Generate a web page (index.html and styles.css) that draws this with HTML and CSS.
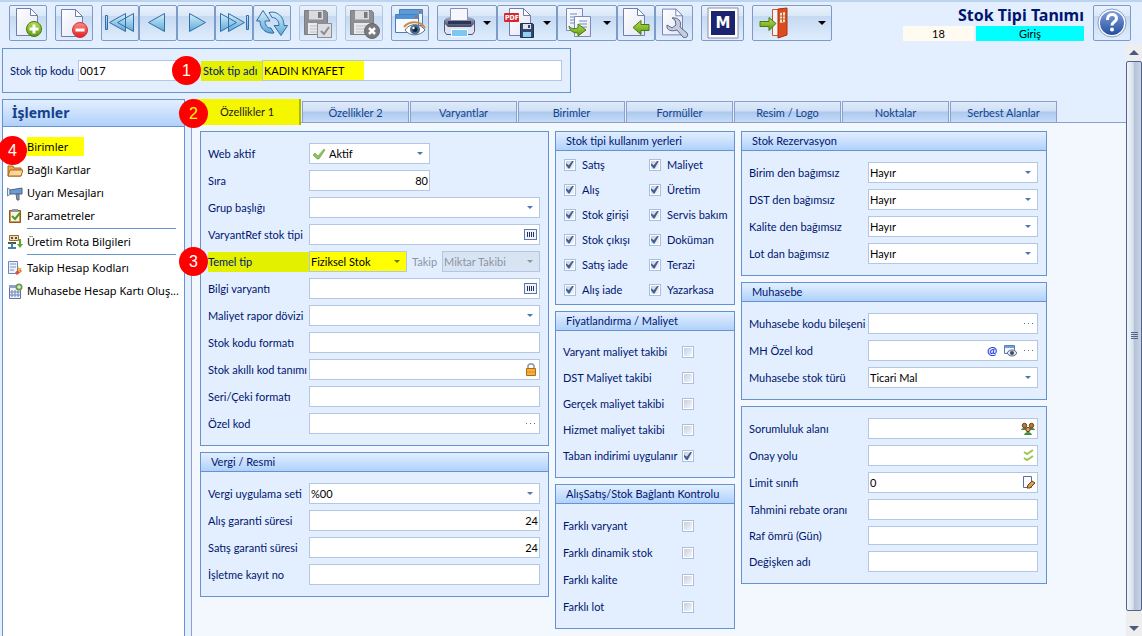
FILE: index.html
```html
<!DOCTYPE html>
<html lang="tr">
<head>
<meta charset="utf-8">
<title>Stok Tipi Tanımı</title>
<link rel="stylesheet" href="styles.css">
</head>
<body>

<!-- shared gradients and small icons -->
<svg class="defs" width="0" height="0" aria-hidden="true">
  <defs>
    <linearGradient id="blue" x1="0" y1="0" x2="0" y2="1"><stop offset="0" stop-color="#d3f0fb"/><stop offset="1" stop-color="#5ca9d8"/></linearGradient>
    <linearGradient id="paper" x1="0" y1="0" x2="1" y2="1"><stop offset="0" stop-color="#ffffff"/><stop offset="1" stop-color="#e3e6f5"/></linearGradient>
    <linearGradient id="green" x1="0" y1="0" x2="0" y2="1"><stop offset="0" stop-color="#b7dd4e"/><stop offset="1" stop-color="#5e9a12"/></linearGradient>
    <linearGradient id="red" x1="0" y1="0" x2="0" y2="1"><stop offset="0" stop-color="#ff8a80"/><stop offset="1" stop-color="#e01f22"/></linearGradient>
    <linearGradient id="help" x1="0" y1="0" x2="0" y2="1"><stop offset="0" stop-color="#7fa0dc"/><stop offset="1" stop-color="#234f9f"/></linearGradient>
    <linearGradient id="steel" x1="0" y1="0" x2="0" y2="1"><stop offset="0" stop-color="#a9b1c8"/><stop offset="1" stop-color="#3c4666"/></linearGradient>
    <symbol id="page" viewBox="0 0 22 28"><path d="M.5.5h14l7 7v20H.5z" fill="url(#paper)" stroke="#6f7fb0"/><path d="M14.5.5v7h7z" fill="#fff" stroke="#6f7fb0"/></symbol>
    <symbol id="floppy" viewBox="0 0 24 25"><path d="M.5.5h21l2 2v22H.5z" fill="#8d8f94" stroke="#7c7e83"/><path d="M5 .5h14v9H5z" fill="#d9dbdf"/><path d="M14 2h3.500v6H14z" fill="#77797e"/><path d="M4 13h16v11H4z" fill="#e9eaec"/><path d="M6 16h12M6 19h12M6 22h12" stroke="#bcbec2"/></symbol>
    <symbol id="barcode" viewBox="0 0 13 11"><rect x=".5" y=".5" width="12" height="10" fill="#eef3fc" stroke="#5b78b4"/><path d="M3.500 3v5M5.500 3v5M7.500 3v5M9.500 3v5" stroke="#27334f"/></symbol>
    <symbol id="dots" viewBox="0 0 9 2"><path d="M0 0h1v1H0zM4 0h1v1H4zM8 0h1v1H8z" fill="#4a6ea5"/></symbol>
  </defs>
</svg>

<header class="toolbar">
  <div class="group">
    <button class="tool" aria-label="Yeni"><svg viewBox="0 0 32 32"><use href="#page" x="4" y="1" width="22" height="28"/><circle cx="22" cy="22" r="7.500" fill="url(#green)" stroke="#47780e"/><path d="M22 17.500v9M17.500 22h9" stroke="#fff" stroke-width="3"/></svg></button>
  </div>
  <div class="group">
    <button class="tool" aria-label="Sil"><svg viewBox="0 0 32 32"><use href="#page" x="3" y="2" width="22" height="28"/><circle cx="22" cy="23" r="7.500" fill="url(#red)" stroke="#d03234"/><path d="M17.500 23h9" stroke="#fff" stroke-width="3"/></svg></button>
  </div>
  <div class="group">
    <button class="tool" aria-label="İlk"><svg viewBox="0 0 32 32"><g fill="url(#blue)" stroke="#356ca6"><path d="M1.500 8.500h2v14h-2zM5.500 15.500l16-9v18zM13.500 15.500l16-9v18z"/></g></svg></button>
    <button class="tool" aria-label="Önceki"><svg viewBox="0 0 32 32"><path d="M6.500 15.500l16-9v18z" fill="url(#blue)" stroke="#356ca6"/></svg></button>
    <button class="tool" aria-label="Sonraki"><svg viewBox="0 0 32 32"><path d="M25.500 15.500l-16-9v18z" fill="url(#blue)" stroke="#356ca6"/></svg></button>
    <button class="tool" aria-label="Son"><svg viewBox="0 0 32 32"><g fill="url(#blue)" stroke="#356ca6"><path d="M18.500 15.500l-16-9v18zM26.500 15.500l-16-9v18zM28.500 8.500h2v14h-2z"/></g></svg></button>
    <button class="tool" aria-label="Yenile"><svg viewBox="0 0 32 32"><g fill="url(#blue)" stroke="#356ca6" stroke-linejoin="round"><path d="M7 3.500L.5 14h3.500c0 8 6 13 14 12l-3-5c-4 0-6-3-6-7h5z"/><path d="M25 28.500l6.500-10H28c0-9-7-15-15-13l3 5c4 0 7 3 7 8h-5z"/></g></svg></button>
  </div>
  <div class="group">
    <button class="tool" disabled aria-label="Kaydet"><svg viewBox="0 0 32 32"><use href="#floppy" x="2" y="3" width="24" height="25"/><rect x="15.500" y="16.500" width="14" height="14" fill="#dcdde0" stroke="#8d8f94"/><path d="M19 24l3 3 5-7" fill="none" stroke="#8a8c90" stroke-width="2"/></svg></button>
  </div>
  <div class="group">
    <button class="tool" disabled aria-label="İptal"><svg viewBox="0 0 32 32"><use href="#floppy" x="2" y="3" width="24" height="25"/><circle cx="24" cy="24" r="7.500" fill="#77797d" stroke="#66686c"/><path d="M21 21l6 6M27 21l-6 6" stroke="#fff" stroke-width="2.500"/></svg></button>
  </div>
  <div class="group">
    <button class="tool" aria-label="Önizleme"><svg viewBox="0 0 32 32"><path d="M5.500 2.500h23v16h-23z" fill="#eef6fd" stroke="#4a7fbb"/><path d="M6 3h22v4H6z" fill="#5b9bd8"/><path d="M25 4h2v2h-2z" fill="#e5533d"/><path d="M1.500 7.500h23v18h-23z" fill="#f7fbff" stroke="#4a7fbb"/><path d="M2 8h22v4H2z" fill="#4f94d6"/><path d="M21 9h2v2h-2z" fill="#e5533d"/><path d="M11 23c4-7 15-7 20 0-5 6-15 7-20 0z" fill="#fff" stroke="#6b6f80"/><path d="M10 20c5-6 16-7 21 1" fill="none" stroke="#c98b4a" stroke-width="2"/><circle cx="21" cy="22.500" r="5" fill="#4a6d94"/><circle cx="21" cy="22.500" r="2.500" fill="#16233c"/><circle cx="19.500" cy="21" r="1.200" fill="#fff"/></svg></button>
  </div>
  <div class="group">
    <button class="tool menu" aria-label="Yazdır"><svg viewBox="0 0 32 32"><path d="M1.500 13.500l3-2h23l4 2v11l-2 3h-26l-2-3z" fill="#dfe3f0" stroke="#4e587d"/><path d="M2 12l4-2h20l5 2v5l-3 3H5l-3-3z" fill="url(#steel)"/><path d="M7.500 1.500h17v12h-17z" fill="#f6f7fc" stroke="#8790b4"/><path d="M5 14h23v3H5z" fill="#2c3553"/><path d="M8.500 22.500h16v7h-16z" fill="#7cc8f2" stroke="#f7fbff"/></svg></button>
    <button class="tool menu" aria-label="PDF olarak kaydet"><svg viewBox="0 0 32 32"><use href="#page" x="6" y="1" width="22" height="28"/><rect x="1" y="6" width="15" height="9" rx="1" fill="#d8262c"/><text x="2" y="13" class="pdf">PDF</text><path d="M17.500 16.500h12l1 1v13h-13z" fill="#34486c" stroke="#22324f"/><path d="M20 17h8v5h-8z" fill="#dfe6f2"/><path d="M25 18h2v3h-2z" fill="#34486c"/><path d="M20 25h8v5h-8z" fill="#8fd0ee"/></svg></button>
    <button class="tool menu" aria-label="Kopyala"><svg viewBox="0 0 32 32"><path d="M3.500 1.500h16v22h-16z" fill="url(#paper)" stroke="#7b8ab8"/><path d="M7 7h7M7 10h9M7 13h9M7 16h6" stroke="#6c8cc4"/><path d="M11.500 9.500h16v20h-16z" fill="url(#paper)" stroke="#7b8ab8"/><path d="M16 14h8M16 17h8M19 20h5" stroke="#6c8cc4"/><path d="M6 19c2 3 5 3 9 2v-4l8 6-8 6v-3c-5 0-8-2-9-7z" fill="url(#green)" stroke="#47780e"/></svg></button>
    <button class="tool" aria-label="İçeri al"><svg viewBox="0 0 32 32"><use href="#page" x="3" y="1" width="22" height="28"/><path d="M13 20.500l8-7v4h8v6h-8v4z" fill="url(#green)" stroke="#47780e"/></svg></button>
    <button class="tool" aria-label="Ayarlar"><svg viewBox="0 0 32 32"><use href="#page" x="4" y="1" width="21" height="28"/><path d="M9 18l5 3 4-3-1-5-3-2c6-1 10 3 8 9l7 6c2 3-1 6-4 4l-6-7c-6 2-11 0-10-5z" fill="#c5ccdd" stroke="#5b6788"/></svg></button>
  </div>
  <div class="group">
    <button class="tool logo" aria-label="Modül"><svg viewBox="0 0 32 32"><path d="M1 1h30v30H1z" fill="#fff" stroke="#8a8da0"/><path d="M4 4h24v24H4z" fill="#1b2470"/><text x="16" y="21" text-anchor="middle" class="m">M</text></svg></button>
  </div>
  <div class="group">
    <button class="tool exit" aria-label="Çıkış"><svg viewBox="0 0 32 32"><path d="M14.500 2.500h13v26h-13z" fill="#f2f4fa" stroke="#c2592f"/><path d="M20 2l9-1v27l-9 3z" fill="#dd4b1f" stroke="#a9350f"/><path d="M22 6l5-1v10l-5 1z" fill="#f2e6c8"/><path d="M24.500 5v10M22 9h5M22 12h5" stroke="#c2592f"/><path d="M18 16.500l-7-6v4H2v5h9v4z" fill="url(#green)" stroke="#47780e"/></svg></button>
  </div>
  <div class="status">
    <h1>Stok Tipi Tanımı</h1>
    <div class="badges"><span class="count">18</span><span class="mode">Giriş</span></div>
  </div>
  <button class="tool" aria-label="Yardım"><svg viewBox="0 0 32 32"><circle cx="16" cy="16" r="14" fill="#fff" stroke="#8a9cc4"/><circle cx="16" cy="16" r="12" fill="url(#help)"/><path d="M11.500 13c0-7 9-7 9-1.500 0 3.500-4.500 3-4.500 7" fill="none" stroke="#fff" stroke-width="3"/><circle cx="16" cy="22.500" r="2" fill="#fff"/></svg></button>
</header>

<div class="window">
  <div class="workspace">

    <form class="record">
      <label for="code">Stok tip kodu</label>
      <span class="field code"><input id="code" value="0017"></span>
      <label for="name" class="mark">Stok tip adı<b class="callout side">1</b></label>
      <span class="field name"><input id="name" value="KADIN KIYAFET"></span>
    </form>

    <div class="columns">
      <nav class="sidebar">
        <h2>İşlemler</h2>
        <ul>
          <li><a href="#"><span class="pad"></span><span class="mark">Birimler</span></a><b class="callout">4</b></li>
          <li><a href="#"><svg viewBox="0 0 16 16"><path d="M1 4h5l1 2h7v8H1z" fill="#e9a64c" stroke="#a8641c"/><path d="M3 8h13l-2 6H1z" fill="#fcd79a" stroke="#a8641c"/></svg>Bağlı Kartlar</a></li>
          <li><a href="#"><svg viewBox="0 0 16 16"><path d="M.5 3v8l3-2V5z" fill="#dfe6ef" stroke="#6c86a8"/><path d="M3 5l12-2v6L3 9z" fill="#6d9bd0" stroke="#45658f"/><path d="M9 9h3v6h-2z" fill="#8c99ab" stroke="#5a6677"/></svg>Uyarı Mesajları</a></li>
          <li><a href="#"><svg viewBox="0 0 16 16"><path d="M2.500 2.500h11v12h-11z" fill="#d99845" stroke="#8b5a1c"/><path d="M4 4h8v9H4z" fill="#f5f4ee"/><path d="M5 1h6v3H5z" fill="#8f98a8"/><path d="M5 8l3 3 5-6" fill="none" stroke="#4c9a1f" stroke-width="2"/></svg>Parametreler</a></li>
          <li class="line"></li>
          <li><a href="#"><svg viewBox="0 0 16 16"><path d="M2.500 1.500h9v5h-9z" fill="#f3dcae" stroke="#96702c"/><path d="M4 4h2M8 4h2M1 9h8" stroke="#5b5140" stroke-width="2"/><path d="M5 9v5M1 14h8" stroke="#3f84b0" stroke-width="2"/><path d="M12 5v5h-2l3 4 3-4h-2V5z" fill="#5aa82c"/></svg>Üretim Rota Bilgileri</a></li>
          <li class="line"></li>
          <li><a href="#"><svg viewBox="0 0 16 16"><path d="M1.500 1.500h9v12h-9z" fill="#eef2fa" stroke="#7084b4"/><path d="M3 4h6M3 7h6M3 10h4" stroke="#7d92c4"/><path d="M8 13l4-5 3 3-5 4z" fill="#d4533d"/><path d="M11 6l1 2 3 0-2 2 1 3-3-2z" fill="#f3b63a"/></svg>Takip Hesap Kodları</a></li>
          <li><a href="#"><svg viewBox="0 0 16 16"><path d="M2.500 4.500h11v11h-11z" fill="#eef2fa" stroke="#5c74a6"/><path d="M5 7v7M8 7v7M11 7v7M3 9h10M3 12h10" stroke="#6e86b6"/><path d="M2 2h7v3H2z" fill="#8ca2cc"/><circle cx="12" cy="4" r="3.500" fill="#6a9d4b"/><path d="M12 2v4M10 4h4" stroke="#fff"/></svg>Muhasebe Hesap Kartı Oluş...</a></li>
        </ul>
      </nav>

      <main class="main">
        <div class="tabs" role="tablist">
          <button class="tab active" role="tab" aria-selected="true">Özellikler 1<b class="callout">2</b></button>
          <button class="tab" role="tab">Özellikler 2</button>
          <button class="tab" role="tab">Varyantlar</button>
          <button class="tab" role="tab">Birimler</button>
          <button class="tab" role="tab">Formüller</button>
          <button class="tab" role="tab">Resim / Logo</button>
          <button class="tab" role="tab">Noktalar</button>
          <button class="tab" role="tab">Serbest Alanlar</button>
        </div>

        <form class="page">
          <div class="col">
            <section class="panel">
              <div class="rows">
                <label for="web">Web aktif</label>
                <span class="field combo half"><svg class="tick" viewBox="0 0 14 12"><path d="M1 7l2-2 3 3 6-7 1 1-6 9H5z" fill="#8dc05a" stroke="#5d9230" stroke-width=".5"/></svg><select id="web"><option>Aktif</option></select></span>
                <label for="order">Sıra</label>
                <span class="field half"><input id="order" class="num" value="80"></span>
                <label for="group">Grup başlığı</label>
                <span class="field combo"><select id="group"><option></option></select></span>
                <label for="ref">VaryantRef stok tipi</label>
                <span class="field"><input id="ref"><button type="button" aria-label="Seç"><svg width="13" height="11"><use href="#barcode"/></svg></button></span>
                <label for="base" class="mark">Temel tip<b class="callout side">3</b></label>
                <div class="pair">
                  <span class="field combo mark"><select id="base"><option>Fiziksel Stok</option></select></span>
                  <label for="track" class="off">Takip</label>
                  <span class="field combo off"><select id="track" disabled><option>Miktar Takibi</option></select></span>
                </div>
                <label for="info">Bilgi varyantı</label>
                <span class="field"><input id="info"><button type="button" aria-label="Seç"><svg width="13" height="11"><use href="#barcode"/></svg></button></span>
                <label for="currency">Maliyet rapor dövizi</label>
                <span class="field combo"><select id="currency"><option></option></select></span>
                <label for="format">Stok kodu formatı</label>
                <span class="field"><input id="format"></span>
                <label for="smart">Stok akıllı kod tanımı</label>
                <span class="field"><input id="smart"><button type="button" aria-label="Kilit"><svg width="13" height="13" viewBox="0 0 13 13"><path d="M4 6V2.500L5.500 1h3L10 2.500V6" fill="none" stroke="#8c9099" stroke-width="1.500"/><path d="M2.500 5.500h9v7h-9z" fill="#f5b041" stroke="#b8690f"/><path d="M3 9h8" stroke="#e08e1b"/></svg></button></span>
                <label for="serial">Seri/Çeki formatı</label>
                <span class="field"><input id="serial"></span>
                <label for="special">Özel kod</label>
                <span class="field"><input id="special"><button type="button" aria-label="Ara"><svg width="9" height="2"><use href="#dots"/></svg></button></span>
              </div>
            </section>

            <section class="panel">
              <h3>Vergi / Resmi</h3>
              <div class="rows">
                <label for="tax">Vergi uygulama seti</label>
                <span class="field combo"><select id="tax"><option>%00</option></select></span>
                <label for="buy">Alış garanti süresi</label>
                <span class="field"><input id="buy" class="num" value="24"></span>
                <label for="sell">Satış garanti süresi</label>
                <span class="field"><input id="sell" class="num" value="24"></span>
                <label for="reg">İşletme kayıt no</label>
                <span class="field"><input id="reg"></span>
              </div>
            </section>
          </div>

          <div class="col">
            <section class="panel">
              <h3>Stok tipi kullanım yerleri</h3>
              <div class="uses">
                <label><input type="checkbox" checked>Satış</label>
                <label><input type="checkbox" checked>Maliyet</label>
                <label><input type="checkbox" checked>Alış</label>
                <label><input type="checkbox" checked>Üretim</label>
                <label><input type="checkbox" checked>Stok girişi</label>
                <label><input type="checkbox" checked>Servis bakım</label>
                <label><input type="checkbox" checked>Stok çıkışı</label>
                <label><input type="checkbox" checked>Doküman</label>
                <label><input type="checkbox" checked>Satış iade</label>
                <label><input type="checkbox" checked>Terazi</label>
                <label><input type="checkbox" checked>Alış iade</label>
                <label><input type="checkbox" checked>Yazarkasa</label>
              </div>
            </section>

            <section class="panel">
              <h3>Fiyatlandırma / Maliyet</h3>
              <div class="flags tight">
                <label><span>Varyant maliyet takibi</span><input type="checkbox"></label>
                <label><span>DST Maliyet takibi</span><input type="checkbox"></label>
                <label><span>Gerçek maliyet takibi</span><input type="checkbox"></label>
                <label><span>Hizmet maliyet takibi</span><input type="checkbox"></label>
                <label><span>Taban indirimi uygulanır</span><input type="checkbox" checked></label>
              </div>
            </section>

            <section class="panel">
              <h3>AlışSatış/Stok Bağlantı Kontrolu</h3>
              <div class="flags">
                <label><span>Farklı varyant</span><input type="checkbox"></label>
                <label><span>Farklı dinamik stok</span><input type="checkbox"></label>
                <label><span>Farklı kalite</span><input type="checkbox"></label>
                <label><span>Farklı lot</span><input type="checkbox"></label>
              </div>
            </section>
          </div>

          <div class="col">
            <section class="panel">
              <h3>Stok Rezervasyon</h3>
              <div class="rows wide">
                <label for="unit">Birim den bağımsız</label>
                <span class="field combo"><select id="unit"><option>Hayır</option></select></span>
                <label for="dst">DST den bağımsız</label>
                <span class="field combo"><select id="dst"><option>Hayır</option></select></span>
                <label for="quality">Kalite den bağımsız</label>
                <span class="field combo"><select id="quality"><option>Hayır</option></select></span>
                <label for="lot">Lot dan bağımsız</label>
                <span class="field combo"><select id="lot"><option>Hayır</option></select></span>
              </div>
            </section>

            <section class="panel">
              <h3>Muhasebe</h3>
              <div class="rows wide">
                <label for="acc">Muhasebe kodu bileşeni</label>
                <span class="field"><input id="acc"><button type="button" aria-label="Ara"><svg width="9" height="2"><use href="#dots"/></svg></button></span>
                <label for="mh">MH Özel kod</label>
                <span class="field"><input id="mh">
                  <button type="button" class="at">@</button>
                  <button type="button" aria-label="Göster"><svg width="13" height="12" viewBox="0 0 13 12"><path d="M.5.5h10v8H.5z" fill="#f4f8fd" stroke="#5a7fb0"/><path d="M1 1h9v2H1z" fill="#6fa0d8"/><path d="M3 8c2-4 8-4 10 0-2 4-8 4-10 0z" fill="#dfe3ea" stroke="#5c6780"/><circle cx="8" cy="8" r="2" fill="#3a4c6e"/></svg></button>
                  <button type="button" aria-label="Ara"><svg width="9" height="2"><use href="#dots"/></svg></button></span>
                <label for="kind">Muhasebe stok türü</label>
                <span class="field combo"><select id="kind"><option>Ticari Mal</option></select></span>
              </div>
            </section>

            <section class="panel">
              <div class="rows wide">
                <label for="area">Sorumluluk alanı</label>
                <span class="field"><input id="area"><button type="button" aria-label="Kişiler"><svg width="14" height="13" viewBox="0 0 14 13"><path d="M0 8c1-3 6-3 7 0zM7 8c1-3 6-3 7 0z" fill="#3f8f3a"/><circle cx="3.500" cy="3.500" r="2.200" fill="#b9783c" stroke="#6b3f16"/><circle cx="10.500" cy="3.500" r="2.200" fill="#b9783c" stroke="#6b3f16"/><path d="M3 13c1-4 7-4 8 0z" fill="#3f8f3a"/><circle cx="7" cy="7.500" r="2.200" fill="#d9a066" stroke="#6b3f16"/></svg></button></span>
                <label for="flow">Onay yolu</label>
                <span class="field"><input id="flow"><button type="button" aria-label="Onay"><svg width="13" height="13" viewBox="0 0 13 13"><path d="M2 3l3 2 6-4M2 9l3 2 6-4" fill="none" stroke="#9cc653" stroke-width="2"/></svg></button></span>
                <label for="limit">Limit sınıfı</label>
                <span class="field"><input id="limit" value="0"><button type="button" aria-label="Düzenle"><svg width="13" height="13" viewBox="0 0 13 13"><path d="M1.500.5h8v11h-8z" fill="#fdfdff" stroke="#5b6f9e"/><path d="M5 12l1-3 4-4 3 2-5 5z" fill="#e09a4f" stroke="#6b3f16"/></svg></button></span>
                <label for="rebate">Tahmini rebate oranı</label>
                <span class="field"><input id="rebate"></span>
                <label for="shelf">Raf ömrü (Gün)</label>
                <span class="field low"><input id="shelf"></span>
                <label for="variable">Değişken adı</label>
                <span class="field"><input id="variable"></span>
              </div>
            </section>
          </div>
        </form>
      </main>
    </div>
  </div>

  <div class="scrollbar">
    <button class="up" aria-label="Yukarı"></button>
    <div class="thumb"></div>
    <button class="down" aria-label="Aşağı"></button>
  </div>
</div>

</body>
</html>
```
FILE: styles.css
```css
* {
  box-sizing: border-box;
}

body {
  display: flex;
  flex-direction: column;
  height: 100vh;
  margin: 0;
  overflow: hidden;
  background: #e3efff;
  border-top: 2px solid #bdd4ee;
  color: #00156e;
  font: 11px/14px Lato, Tahoma, sans-serif;
}

button, input, select {
  margin: 0;
  padding: 0;
  border: none;
  background: none;
  border-radius: 0;
  font: inherit;
  color: inherit;
}

svg {
  display: block;
  flex: none;
}

.defs {
  position: absolute;
}

/* Toolbar */
.toolbar {
  display: flex;
  gap: 8px;
  padding: 3px 11px 3px 9px;
}

.group {
  display: flex;
}

.tool {
  display: flex;
  align-items: center;
  justify-content: center;
  width: 38px;
  height: 36px;
  border: 1px solid #7d9bc8;
  border-radius: 2px;
  background: linear-gradient(#e9f2fd 0%, #dbe8f8 28%, #c5d9f1 30%, #dfedfd 100%);
}

.tool svg {
  width: 32px;
  height: 32px;
}

.tool:disabled {
  border-color: #b4c4dc;
}

.menu, .exit {
  width: 60px;
  justify-content: space-between;
  padding: 0 5px;
}

.logo {
  width: 43px;
}

.exit {
  width: 80px;
}

.menu::after, .exit::after {
  content: "";
  border: 4px solid transparent;
  border-top-color: #000;
  border-bottom: none;
}

.pdf {
  font: bold 7px "DejaVu Sans Condensed", sans-serif;
  fill: #fff;
}

.m {
  font: bold 15px "DejaVu Sans", sans-serif;
  fill: #fff;
}

.status {
  margin: 0 1px 0 auto;
  text-align: right;
}

.status h1 {
  margin: 0;
  font: bold 16px/21px "Noto Sans", sans-serif;
}

.badges {
  display: flex;
  justify-content: flex-end;
  gap: 2px;
  color: #000;
  line-height: 15px;
  text-align: center;
}

.count {
  width: 71px;
  background: #fffbf0;
}

.mode {
  width: 108px;
  background: #0ff;
}

/* Window body */
.window {
  display: flex;
  flex: 1;
  min-height: 0;
}

.workspace {
  display: flex;
  flex: 1;
  flex-direction: column;
  min-width: 0;
  padding: 4px 0 0 2px;
}

.record {
  display: flex;
  align-items: center;
  max-width: 569px;
  margin-bottom: 6px;
  padding: 11px 8px 11px 7px;
  border: 1px solid #6593cf;
}

.record .code {
  width: 106px;
  margin-right: 17px;
}

.record label:first-child {
  width: 68px;
}

.record .mark {
  width: 61px;
  padding-left: 2px;
}

.record .name {
  flex: 1;
  background: linear-gradient(90deg, #ff0 101px, #fff 101px);
}

.field {
  display: flex;
  align-items: center;
  height: 21px;
  min-width: 0;
  border: 1px solid #b3c7e4;
  background: #fff;
  color: #000;
}

.field input, .field select {
  flex: 1;
  width: 0;
  min-width: 0;
  height: 100%;
  padding: 0 1px;
  outline: none;
  appearance: none;
}

.field button {
  display: flex;
  align-items: center;
  justify-content: center;
  width: 18px;
}

.field .num {
  text-align: right;
}

.combo::after {
  content: "";
  margin: 0 6px 0 -12px;
  border: 3px solid transparent;
  border-top-color: #4a78b5;
  border-bottom: none;
  pointer-events: none;
}

.field .at {
  color: #2440e0;
  font-size: 12px;
  font-weight: bold;
}

.tick {
  width: 14px;
  height: 12px;
  margin: 0 2px;
}

.low {
  height: 19px;
}

label.mark {
  position: relative;
  height: 20px;
  background: #e3f000;
  line-height: 20px;
}

.callout {
  position: absolute;
  z-index: 2;
  width: 29px;
  height: 29px;
  border-radius: 50%;
  background: #f00;
  color: #fff;
  font: 16px/29px "Liberation Sans", sans-serif;
  text-align: center;
}

.side {
  top: -5px;
  left: -29px;
}

/* Sidebar */
.columns {
  display: flex;
  flex: 1;
  gap: 6px;
  min-height: 0;
}

.sidebar {
  width: 183px;
  border: 1px solid #6593cf;
  border-bottom: none;
  background: #fff;
  color: #000;
  font: 11px/23px "Noto Sans", sans-serif;
}

.sidebar h2 {
  margin: 0;
  padding-left: 9px;
  border-bottom: 1px solid #6593cf;
  background: linear-gradient(#e3efff, #b0d1fb);
  color: #15428b;
  font: bold 14px/26px "Noto Sans", sans-serif;
}

.sidebar ul {
  margin: 0;
  padding: 8px 0 0 4px;
  list-style: none;
}

.sidebar li {
  position: relative;
}

.sidebar a {
  display: flex;
  align-items: center;
  gap: 4px;
  height: 23px;
  color: inherit;
  text-decoration: none;
  white-space: nowrap;
}

.sidebar svg, .pad {
  width: 16px;
  height: 16px;
}

.sidebar .mark {
  width: 57px;
  background: #ff0;
  line-height: 19px;
}

.sidebar .line {
  height: 1px;
  margin: 1px 8px 1px 20px;
  background: #6593cf;
}

.sidebar .callout {
  top: 1px;
  left: -9px;
}

/* Tabs */
.main {
  display: flex;
  flex: 1;
  flex-direction: column;
  min-width: 0;
}

.tabs {
  display: grid;
  grid-template-columns: 110fr repeat(7, 107fr);
  align-items: end;
  gap: 1px;
  padding: 2px 69px 0 0;
  border-bottom: 1px solid #8ba0cc;
}

.tab {
  height: 21px;
  padding-top: 2px;
  border: 1px solid #8ba0cc;
  border-bottom: none;
  background: linear-gradient(#dfebfb 0%, #cfdff5 45%, #abc8ee 50%, #c6dcf8 100%);
  color: #15428b;
}

.active {
  position: relative;
  height: 26px;
  margin: -2px 0 -3px;
  padding: 0 0 0 4px;
  border: none;
  border-right: 2px solid #b3b800;
  background: #f4f700;
  color: #1c1c1c;
}

.active .callout {
  top: 0;
  left: -12px;
  color: #ff0;
}

/* Form panels */
.page {
  display: grid;
  flex: 1;
  grid-template-columns: 349fr 180fr 306fr;
  align-content: start;
  gap: 6px;
  min-height: 0;
  padding: 8px 79px 0 8px;
  border-left: 1px solid #8ba0cc;
  background: #f3f8ff;
}

.col {
  display: flex;
  flex-direction: column;
  gap: 6px;
  min-width: 0;
}

.panel {
  border: 1px solid #6593cf;
  background: #e3efff;
}

.panel h3 {
  margin: 0;
  padding-left: 10px;
  border-bottom: 1px solid #6593cf;
  background: linear-gradient(#e3efff, #b0d1fb);
  font-size: 11px;
  font-weight: normal;
  line-height: 18px;
}

.rows {
  display: grid;
  grid-template-columns: 101px 1fr;
  align-items: center;
  gap: 6px 0;
  padding: 11px 8px 11px 7px;
  white-space: nowrap;
}

.wide {
  grid-template-columns: 119px 1fr;
}

.half {
  width: 121px;
}

.pair {
  display: flex;
  align-items: center;
  min-width: 0;
}

.pair .field {
  flex: 1;
}

.pair label {
  padding: 0 5px;
}

.pair .mark {
  background: #ff0;
}

.pair .mark::after {
  border-top-color: #5d7a00;
}

.off {
  color: #8b94a5;
}

.field.off {
  background: #d9e4f3;
  color: #8b94a5;
}

.off select {
  opacity: 1;
}

.off::after {
  border-top-color: #8b94a5;
}

.uses {
  display: grid;
  grid-template-columns: 85px 1fr;
  padding: 1px 0 2px 8px;
  white-space: nowrap;
}

.uses label {
  display: flex;
  align-items: center;
  gap: 6px;
  height: 25px;
}

.flags {
  padding: 8px 0 8px 7px;
}

.flags label {
  display: flex;
  align-items: center;
  height: 27px;
  white-space: nowrap;
}

.tight label {
  height: 26px;
}

.flags span {
  width: 119px;
}

input[type="checkbox"] {
  flex: none;
  width: 12px;
  height: 12px;
  border: 1px solid #a9bfdf;
  background: linear-gradient(135deg, #c5cad6, #fafbfd);
  box-shadow: inset 0 0 0 1px #fff;
  appearance: none;
}

input[type="checkbox"]:checked::before {
  content: "";
  display: block;
  width: 8px;
  height: 8px;
  margin: 1px;
  background: #3f5f96;
  clip-path: polygon(0 35%, 35% 60%, 80% 0, 100% 0, 45% 100%, 30% 100%, 0 60%);
}

/* Scrollbar */
.scrollbar {
  display: flex;
  flex-direction: column;
  width: 16px;
  background: #eee;
}

.scrollbar button {
  display: flex;
  align-items: center;
  justify-content: center;
  height: 17px;
}

.scrollbar .down {
  height: 25px;
  padding-top: 10px;
}

.up::before, .down::before {
  content: "";
  border: 5px solid transparent;
  border-bottom-color: #4a5a80;
  border-top: none;
}

.down::before {
  border: 5px solid transparent;
  border-top-color: #4a5a80;
  border-bottom: none;
}

.thumb {
  display: flex;
  flex: 1;
  align-items: center;
  justify-content: center;
  border: 1px solid #52658f;
  border-radius: 2px;
  background: linear-gradient(90deg, #f2f5fa 0%, #d8e0ec 45%, #b3c2d6 50%, #c8d4e4 100%);
}

.thumb::before {
  content: "";
  width: 7px;
  height: 8px;
  background: repeating-linear-gradient(#52658f 0 1px, transparent 1px 2px);
}
```
